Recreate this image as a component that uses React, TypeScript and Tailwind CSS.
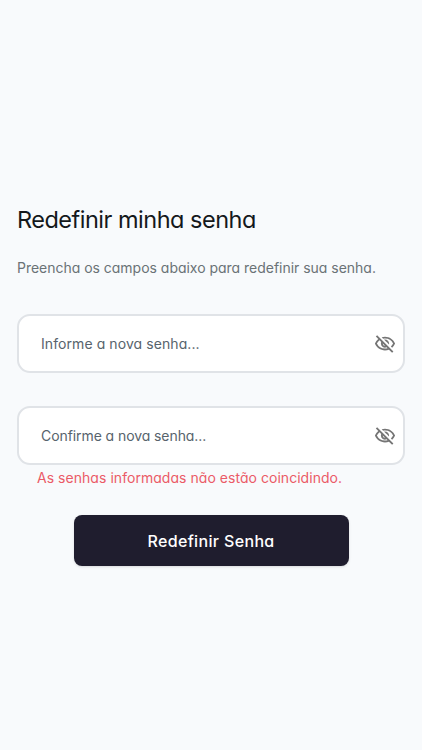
import React, { useState } from "react";
import { MdOutlineVisibility, MdOutlineVisibilityOff } from "react-icons/md";

interface PasswordFieldProps {
  placeholder: string;
  tracking: string;
}

function PasswordField({ placeholder, tracking }: PasswordFieldProps) {
  const [visible, setVisible] = useState(false);

  return (
    <div className="flex h-[59px] items-center rounded-[13px] border-2 border-[#e0e3e7] bg-white pl-[22px] pr-[7px]">
      <input
        type={visible ? "text" : "password"}
        placeholder={placeholder}
        className={`min-w-0 flex-1 bg-transparent pb-px font-['Inter',sans-serif] text-[14px] text-[#57636c] outline-none placeholder:text-[#57636c] placeholder:opacity-100 ${tracking}`}
      />
      <button type="button" onClick={() => setVisible(!visible)} className="cursor-pointer text-[#757575]">
        {visible ? <MdOutlineVisibility size={22} /> : <MdOutlineVisibilityOff size={22} />}
      </button>
    </div>
  );
}

export default function App() {
  return (
    <div className="flex h-screen flex-col bg-[#f8fafc] px-[17px] pt-[202px] font-['Inter',sans-serif] [font-feature-settings:'cv11'] [&_*]:[font-feature-settings:'cv11']">
      <h1 className="h-9 whitespace-nowrap text-[23.5px] font-normal leading-9 tracking-[-0.5px] text-[#14181b]">
        Redefinir minha senha
      </h1>
      <p className="mt-5 whitespace-nowrap text-[14px] leading-5 tracking-[-0.02px] text-[#6a7276]">
        Preencha os campos abaixo para redefinir sua senha.
      </p>

      <form className="mt-9 flex flex-col" onSubmit={(e) => e.preventDefault()}>
        <PasswordField placeholder="Informe a nova senha..." tracking="tracking-[0.08px]" />
        <div className="mt-[33px]">
          <PasswordField placeholder="Confirme a nova senha..." tracking="tracking-[-0.08px]" />
        </div>
        <p className="ml-5 mt-[3px] whitespace-nowrap text-[14px] leading-5 tracking-[0.04px] text-[#eb5b67]">
          As senhas informadas não estão coincidindo.
        </p>
        <button
          type="submit"
          className="mt-[27px] h-[51px] w-[275px] cursor-pointer self-center rounded-lg bg-[#1f1d2e] text-[16px] font-medium tracking-[0.35px] text-white shadow-sm"
        >
          Redefinir Senha
        </button>
      </form>
    </div>
  );
}
